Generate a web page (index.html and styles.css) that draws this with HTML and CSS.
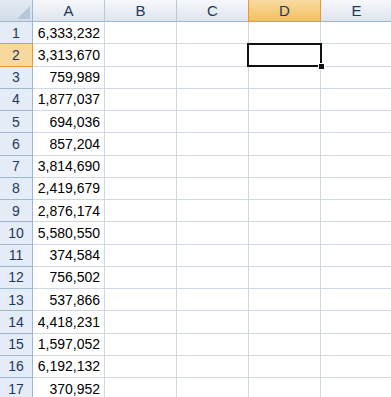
FILE: index.html
```html
<!DOCTYPE html>
<html lang="en">
<head>
<meta charset="UTF-8">
<title>Book1</title>
<link rel="stylesheet" href="styles.css">
</head>
<body>

<table class="sheet">
    <thead>
        <tr>
            <th class="corner"><span class="corner-mark"></span></th>
            <th class="col-head">A</th>
            <th class="col-head">B</th>
            <th class="col-head">C</th>
            <th class="col-head col-head-active">D</th>
            <th class="col-head">E</th>
        </tr>
    </thead>
    <tbody>
        <tr><th class="row-head">1</th><td class="num">6,333,232</td><td></td><td></td><td></td><td></td></tr>
        <tr><th class="row-head row-head-active">2</th><td class="num">3,313,670</td><td></td><td></td><td class="active"><div class="cursor"><span class="handle"></span></div></td><td></td></tr>
        <tr><th class="row-head">3</th><td class="num">759,989</td><td></td><td></td><td></td><td></td></tr>
        <tr><th class="row-head">4</th><td class="num">1,877,037</td><td></td><td></td><td></td><td></td></tr>
        <tr><th class="row-head">5</th><td class="num">694,036</td><td></td><td></td><td></td><td></td></tr>
        <tr><th class="row-head">6</th><td class="num">857,204</td><td></td><td></td><td></td><td></td></tr>
        <tr><th class="row-head">7</th><td class="num">3,814,690</td><td></td><td></td><td></td><td></td></tr>
        <tr><th class="row-head">8</th><td class="num">2,419,679</td><td></td><td></td><td></td><td></td></tr>
        <tr><th class="row-head">9</th><td class="num">2,876,174</td><td></td><td></td><td></td><td></td></tr>
        <tr><th class="row-head">10</th><td class="num">5,580,550</td><td></td><td></td><td></td><td></td></tr>
        <tr><th class="row-head">11</th><td class="num">374,584</td><td></td><td></td><td></td><td></td></tr>
        <tr><th class="row-head">12</th><td class="num">756,502</td><td></td><td></td><td></td><td></td></tr>
        <tr><th class="row-head">13</th><td class="num">537,866</td><td></td><td></td><td></td><td></td></tr>
        <tr><th class="row-head">14</th><td class="num">4,418,231</td><td></td><td></td><td></td><td></td></tr>
        <tr><th class="row-head">15</th><td class="num">1,597,052</td><td></td><td></td><td></td><td></td></tr>
        <tr><th class="row-head">16</th><td class="num">6,192,132</td><td></td><td></td><td></td><td></td></tr>
        <tr><th class="row-head">17</th><td class="num">370,952</td><td></td><td></td><td></td><td></td></tr>
    </tbody>
</table>

</body>
</html>
```

FILE: styles.css
```css
body {
    margin: 0;
    padding: 0;
    background: #fff;
    overflow: hidden;
    font-family: "Liberation Sans", Arial, sans-serif;
    font-size: 14px;
}

.sheet {
    border-collapse: separate;
    border-spacing: 0;
    table-layout: fixed;
    width: 393px;
}

.sheet th,
.sheet td {
    padding: 0;
    width: 71px;
    height: 21.25px;
    border-right: 1px solid #d0d7e5;
    border-bottom: 1px solid #d0d7e5;
    font-weight: normal;
    line-height: 1;
}

.sheet thead th {
    height: 21px;
    background: linear-gradient(#f6f8fb, #dfe5ee);
    border-right-color: #b9c9da;
    border-bottom-color: #9eb6ce;
    color: #1e395b;
    font-size: 15px;
    text-align: center;
}

.sheet .corner {
    width: 32px;
    position: relative;
    background: linear-gradient(#e2e9f2, #d3ddea);
    border-right-color: #9eb6ce;
}

.corner-mark {
    position: absolute;
    right: 2px;
    bottom: 2px;
    width: 0;
    height: 0;
    border-left: 13px solid transparent;
    border-bottom: 13px solid #b5c6db;
}

.sheet .col-head-active {
    background: linear-gradient(#f9dba2, #f1c15f);
    border-right-color: #f29536;
    border-bottom-color: #f29536;
    box-shadow: -1px 0 0 #f29536;
}

.row-head {
    background: #e4ecf7;
    color: #1e395b;
    text-align: center;
    border-right-color: #9eb6ce !important;
    border-bottom-color: #9eb6ce !important;
}

.row-head-active {
    background: #f8d89d;
    border-right-color: #f29536 !important;
    border-bottom-color: #f29536 !important;
    box-shadow: 0 -1px 0 #f29536;
}

.num {
    text-align: right;
    padding-right: 4px !important;
    color: #000;
}

.active {
    position: relative;
}

.cursor {
    position: absolute;
    left: -2px;
    top: -1px;
    width: 71px;
    height: 20px;
    border: 2px solid #111;
}

.handle {
    position: absolute;
    right: -5px;
    bottom: -5px;
    width: 5px;
    height: 5px;
    background: #111;
    border: 1px solid #fff;
}
```
